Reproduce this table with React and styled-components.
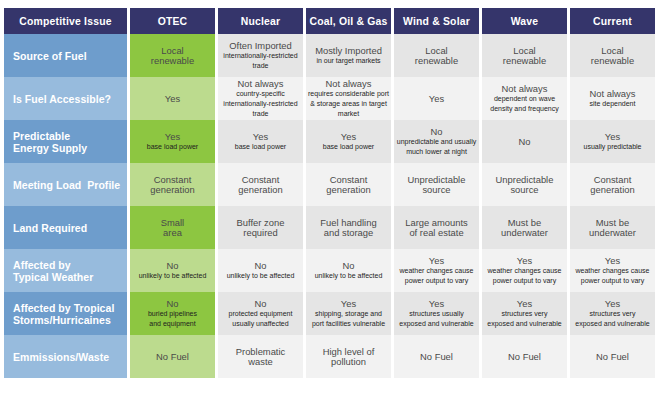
import React from 'react';
import styled, { createGlobalStyle } from 'styled-components';

const GlobalStyle = createGlobalStyle`
  body {
    margin: 0;
    background: #ffffff;
    font-family: "Liberation Sans", Arial, sans-serif;
  }
`;

const columns = ['OTEC', 'Nuclear', 'Coal, Oil & Gas', 'Wind & Solar', 'Wave', 'Current'];

const c = (main, sub = []) => ({ main, sub });

const rows = [
  {
    issue: ['Source of Fuel'],
    cells: [
      c(['Local', 'renewable']),
      c(['Often Imported'], ['internationally-restricted', 'trade']),
      c(['Mostly Imported'], ['in our target markets']),
      c(['Local', 'renewable']),
      c(['Local', 'renewable']),
      c(['Local', 'renewable']),
    ],
  },
  {
    issue: ['Is Fuel Accessible?'],
    cells: [
      c(['Yes']),
      c(['Not always'], ['country-specific', 'internationally-restricted', 'trade']),
      c(['Not always'], ['requires considerable port', '& storage areas in target', 'market']),
      c(['Yes']),
      c(['Not always'], ['dependent on wave', 'density and frequency']),
      c(['Not always'], ['site dependent']),
    ],
  },
  {
    issue: ['Predictable', 'Energy Supply'],
    cells: [
      c(['Yes'], ['base load power']),
      c(['Yes'], ['base load power']),
      c(['Yes'], ['base load power']),
      c(['No'], ['unpredictable and usually', 'much lower at night']),
      c(['No']),
      c(['Yes'], ['usually predictable']),
    ],
  },
  {
    issue: ['Meeting Load  Profile'],
    cells: [
      c(['Constant', 'generation']),
      c(['Constant', 'generation']),
      c(['Constant', 'generation']),
      c(['Unpredictable', 'source']),
      c(['Unpredictable', 'source']),
      c(['Constant', 'generation']),
    ],
  },
  {
    issue: ['Land Required'],
    cells: [
      c(['Small', 'area']),
      c(['Buffer zone', 'required']),
      c(['Fuel handling', 'and storage']),
      c(['Large amounts', 'of real estate']),
      c(['Must be', 'underwater']),
      c(['Must be', 'underwater']),
    ],
  },
  {
    issue: ['Affected by', 'Typical Weather'],
    cells: [
      c(['No'], ['unlikely to be affected']),
      c(['No'], ['unlikely to be affected']),
      c(['No'], ['unlikely to be affected']),
      c(['Yes'], ['weather changes cause', 'power output to vary']),
      c(['Yes'], ['weather changes cause', 'power output to vary']),
      c(['Yes'], ['weather changes cause', 'power output to vary']),
    ],
  },
  {
    issue: ['Affected by Tropical', 'Storms/Hurricaines'],
    cells: [
      c(['No'], ['buried pipelines', 'and equipment']),
      c(['No'], ['protected equipment', 'usually unaffected']),
      c(['Yes'], ['shipping, storage and', 'port facilities vulnerable']),
      c(['Yes'], ['structures usually', 'exposed and vulnerable']),
      c(['Yes'], ['structures very', 'exposed and vulnerable']),
      c(['Yes'], ['structures very', 'exposed and vulnerable']),
    ],
  },
  {
    issue: ['Emmissions/Waste'],
    cells: [
      c(['No Fuel']),
      c(['Problematic', 'waste']),
      c(['High level of', 'pollution']),
      c(['No Fuel']),
      c(['No Fuel']),
      c(['No Fuel']),
    ],
  },
];

function App() {
  return (
    <>
      <GlobalStyle />
      <St.Page>
        <St.Table>
          <St.HeaderCell>Competitive Issue</St.HeaderCell>
          {columns.map((col) => (
            <St.HeaderCell key={col}>{col}</St.HeaderCell>
          ))}
          {rows.map((row, r) => {
            const light = r % 2 === 1;
            return (
              <React.Fragment key={row.issue.join(' ')}>
                <St.IssueCell $light={light}>
                  {row.issue.map((line) => (
                    <span key={line}>{line}</span>
                  ))}
                </St.IssueCell>
                {row.cells.map((cell, i) => (
                  <St.ValueCell key={i} $otec={i === 0} $light={light}>
                    {cell.main.map((line) => (
                      <St.Main key={line}>{line}</St.Main>
                    ))}
                    {cell.sub.map((line) => (
                      <St.Sub key={line}>{line}</St.Sub>
                    ))}
                  </St.ValueCell>
                ))}
              </React.Fragment>
            );
          })}
        </St.Table>
      </St.Page>
    </>
  );
}

export default App;

const St = {
  Page: styled.div`
    width: 656px;
    height: 404px;
    padding: 8px 0 0 4px;
    box-sizing: border-box;
  `,

  Table: styled.div`
    display: grid;
    grid-template-columns: 123px repeat(6, 85px);
    grid-template-rows: 26px repeat(8, 43px);
    column-gap: 3px;
    width: 651px;
  `,

  HeaderCell: styled.div`
    display: flex;
    align-items: center;
    justify-content: center;
    background: #35356b;
    color: #ffffff;
    font-weight: 700;
    font-size: 10.4px;
    letter-spacing: 0.2px;
    white-space: nowrap;
  `,

  IssueCell: styled.div`
    display: flex;
    flex-direction: column;
    justify-content: center;
    padding-left: 9px;
    background: ${({ $light }) => ($light ? '#97bbdd' : '#6e9dcc')};
    color: #ffffff;
    font-weight: 700;
    font-size: 10.5px;
    letter-spacing: 0.05px;
    line-height: 12px;
    white-space: pre;
  `,

  ValueCell: styled.div`
    display: flex;
    flex-direction: column;
    align-items: center;
    justify-content: center;
    text-align: center;
    white-space: nowrap;
    background: ${({ $otec, $light }) =>
      $otec ? ($light ? '#bcdb8e' : '#8dc641') : $light ? '#f2f2f2' : '#e5e5e5'};
  `,

  Main: styled.span`
    font-size: 9.4px;
    line-height: 10px;
    color: #4a4a4a;
  `,

  Sub: styled.span`
    font-size: 7px;
    line-height: 10px;
    color: #1e1e1e;
  `,
};
